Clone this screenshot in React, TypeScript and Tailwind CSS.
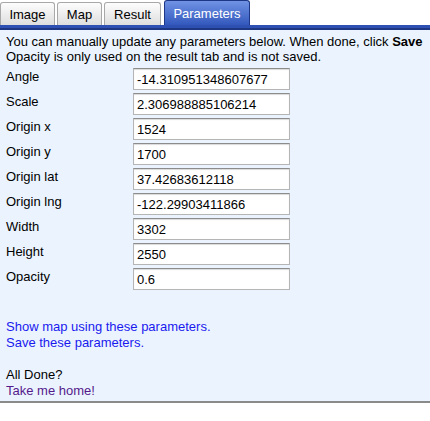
import React from "react";

const rows: [string, string][] = [
  ["Angle", "-14.310951348607677"],
  ["Scale", "2.306988885106214"],
  ["Origin x", "1524"],
  ["Origin y", "1700"],
  ["Origin lat", "37.42683612118"],
  ["Origin lng", "-122.29903411866"],
  ["Width", "3302"],
  ["Height", "2550"],
  ["Opacity", "0.6"],
];

function Tab({ label, w }: { label: string; w: string }) {
  return (
    <div
      className={`${w} mt-[2px] h-[23px] flex items-center justify-center rounded-t-[3px] border border-b-0 border-[#a8a8a8] bg-gradient-to-b from-[#fdfdfd] to-[#dedede] text-black`}
    >
      {label}
    </div>
  );
}

export default function App() {
  return (
    <div
      className="w-[430px] h-[421px] bg-white text-[13px] leading-[15px] text-black"
      style={{ fontFamily: '"Liberation Sans", Arial, sans-serif' }}
    >
      <div className="flex items-end gap-[2px] h-[25px]">
        <Tab label="Image" w="w-[55px]" />
        <Tab label="Map" w="w-[45px]" />
        <Tab label="Result" w="w-[57px]" />
        <div className="ml-[1px] w-[86px] h-[25px] flex items-center justify-center rounded-t-[3px] border border-b-0 border-[#1d3686] bg-gradient-to-b from-[#7193e4] to-[#3358bd] text-white">
          Parameters
        </div>
      </div>
      <div className="h-[5px] bg-[#2f50b3] border-b-2 border-[#1e3782]" />
      <div className="h-[373px] bg-[#ebf4fe] border-b-2 border-[#8a8a8a] pl-[6px] pt-[4px] flex flex-col">
        <div className="whitespace-nowrap">
          You can manually update any parameters below. When done, click <b>Save</b>
        </div>
        <div className="whitespace-nowrap">Opacity is only used on the result tab and is not saved.</div>
        <div className="flex flex-col mt-[4px]">
          {rows.map(([label, value]) => (
            <div key={label} className="flex h-[25px]">
              <div className="w-[127px] pt-[1px]">{label}</div>
              <div className="w-[157px] h-[22px] bg-white border border-[#b5b5b5] border-t-[#8c8c8c] shadow-[inset_0_1px_1px_rgba(0,0,0,0.15)] pl-[3px] flex items-center">
                {value}
              </div>
            </div>
          ))}
        </div>
        <div className="mt-[26px] flex flex-col leading-[16px]">
          <a className="text-[#1a1aee] cursor-pointer w-fit">Show map using these parameters.</a>
          <a className="text-[#1a1aee] cursor-pointer w-fit">Save these parameters.</a>
          <div className="h-[16px]" />
          <div>All Done?</div>
          <a className="text-[#551a8b] cursor-pointer w-fit">Take me home!</a>
        </div>
      </div>
    </div>
  );
}
